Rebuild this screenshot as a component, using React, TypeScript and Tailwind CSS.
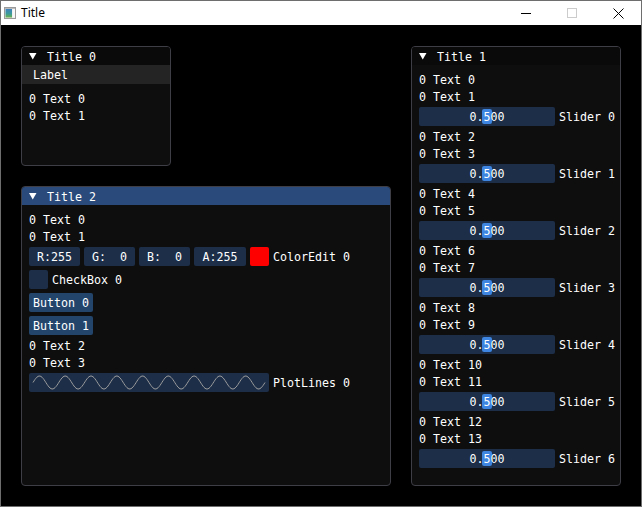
import React from "react";

const mono = "font-['DejaVu_Sans_Mono',monospace] text-[11.63px] leading-[15px] text-white whitespace-pre";
const line = `${mono} block h-[13px]`;

function Arrow() {
  return (
    <svg width="8" height="7" viewBox="0 0 8 7" className="shrink-0">
      <polygon points="0,0 7.5,0 3.75,6.5" fill="#ffffff" />
    </svg>
  );
}

function TitleBar({ title, active }: { title: string; active?: boolean }) {
  return (
    <div className={`h-[18px] shrink-0 flex items-center pl-[7px] ${active ? "bg-[#294a7a]" : "bg-[#0a0a0a]"}`}>
      <Arrow />
      <span className={`${line} ml-[10px]`}>{title}</span>
    </div>
  );
}

function Text({ children }: { children: React.ReactNode }) {
  return <div className={line}>{children}</div>;
}

function Slider({ label }: { label: string }) {
  return (
    <div className="flex items-center gap-[4px] h-[19px]">
      <div className="relative w-[136px] h-[19px] bg-[#1c2e48] rounded-[2px]">
        <div className="absolute left-[63px] top-[2px] w-[10px] h-[15px] bg-[#3d85e0] rounded-[2px]" />
        <div className="absolute inset-0 flex items-center justify-center">
          <span className={line}>0.500</span>
        </div>
      </div>
      <span className={line}>{label}</span>
    </div>
  );
}

function Field({ text, wide }: { text: string; wide?: boolean }) {
  return (
    <div
      className={`h-[19px] bg-[#1c2e48] rounded-[2px] flex items-center justify-center ${wide ? "w-[52px]" : "w-[51px]"}`}
    >
      <span className={line}>{text}</span>
    </div>
  );
}

function Button({ label }: { label: string }) {
  return (
    <div className="flex">
      <div className="h-[19px] px-[4px] bg-[#23456c] rounded-[2px] flex items-center">
        <span className={line}>{label}</span>
      </div>
    </div>
  );
}

function Plot() {
  const pts: string[] = [];
  const n = 232;
  for (let i = 0; i <= n; i++) {
    const x = 4 + i;
    const y = 9.5 - 6.5 * Math.sin((2 * Math.PI * 9 * i) / n);
    pts.push(`${x},${y.toFixed(2)}`);
  }
  return (
    <div className="flex items-center gap-[4px] h-[19px]">
      <div className="w-[240px] h-[19px] bg-[#1c2e48] rounded-[2px]">
        <svg width="240" height="19" viewBox="0 0 240 19">
          <polyline points={pts.join(" ")} fill="none" stroke="#9c9c9c" strokeWidth="1" />
        </svg>
      </div>
      <span className={line}>PlotLines 0</span>
    </div>
  );
}

function AppIcon() {
  return (
    <svg width="12" height="12" viewBox="0 0 12 12" className="shrink-0">
      <defs>
        <linearGradient id="ig" x1="0" y1="0" x2="0" y2="1">
          <stop offset="0" stopColor="#3f7fc0" />
          <stop offset="0.55" stopColor="#3a9a9a" />
          <stop offset="1" stopColor="#6ab04c" />
        </linearGradient>
      </defs>
      <rect x="0.5" y="0.5" width="11" height="11" fill="#e8e8e8" stroke="#9a9a9a" />
      <rect x="1.5" y="2" width="6.5" height="8.5" fill="url(#ig)" />
      <rect x="8.5" y="2" width="2.5" height="8.5" fill="#f7f7f7" />
      <rect x="1" y="1" width="10" height="1" fill="#bcbcbc" />
    </svg>
  );
}

export default function App() {
  return (
    <div className="w-[642px] h-[507px] border border-[#6e6e6e] flex flex-col bg-black overflow-hidden">
      <div className="h-[24px] shrink-0 bg-white flex items-center">
        <div className="pl-[3px] flex items-center">
          <AppIcon />
          <span className="ml-[5px] font-['Noto_Sans',sans-serif] text-[12px] leading-[16px] text-black">Title</span>
        </div>
        <div className="ml-auto flex h-full">
          <div className="w-[46px] h-full flex items-center justify-center">
            <svg width="10" height="10" viewBox="0 0 10 10">
              <line x1="0" y1="5.5" x2="10" y2="5.5" stroke="#000" strokeWidth="1" />
            </svg>
          </div>
          <div className="w-[46px] h-full flex items-center justify-center">
            <svg width="10" height="10" viewBox="0 0 10 10">
              <rect x="0.5" y="0.5" width="9" height="9" fill="none" stroke="#cccccc" strokeWidth="1" />
            </svg>
          </div>
          <div className="w-[46px] h-full flex items-center justify-center">
            <svg width="11" height="11" viewBox="0 0 11 11">
              <line x1="0.5" y1="0.5" x2="10.5" y2="10.5" stroke="#000" strokeWidth="1" />
              <line x1="10.5" y1="0.5" x2="0.5" y2="10.5" stroke="#000" strokeWidth="1" />
            </svg>
          </div>
        </div>
      </div>

      <div className="relative flex-1 bg-black">
        {/* Window: Title 0 */}
        <div className="absolute left-[20px] top-[21px] w-[150px] h-[120px] border border-[#3e3e47] rounded-[4px] overflow-hidden bg-[#0e0e0e] flex flex-col">
          <TitleBar title="Title 0" />
          <div className="h-[19px] shrink-0 bg-[#242424] flex items-center pl-[11px]">
            <span className={`${line} text-[#999999]`}>Label</span>
          </div>
          <div className="flex flex-col gap-[4px] pt-[8px] pl-[7px]">
            <Text>0 Text 0</Text>
            <Text>0 Text 1</Text>
          </div>
        </div>

        {/* Window: Title 2 */}
        <div className="absolute left-[20px] top-[161px] w-[370px] h-[300px] border border-[#3e3e47] rounded-[4px] overflow-hidden bg-[#0e0e0e] flex flex-col">
          <TitleBar title="Title 2" active />
          <div className="flex flex-col gap-[4px] pt-[8px] pl-[7px]">
            <Text>0 Text 0</Text>
            <Text>0 Text 1</Text>
            <div className="flex items-center gap-[4px] h-[19px]">
              <Field text="R:255" />
              <Field text="G:  0" />
              <Field text="B:  0" />
              <Field text="A:255" wide />
              <div className="w-[19px] h-[19px] bg-[#ff0000] rounded-[2px]" />
              <span className={line}>ColorEdit 0</span>
            </div>
            <div className="flex items-center gap-[4px] h-[19px]">
              <div className="w-[19px] h-[19px] bg-[#1c2e48] rounded-[2px]" />
              <span className={line}>CheckBox 0</span>
            </div>
            <Button label="Button 0" />
            <Button label="Button 1" />
            <Text>0 Text 2</Text>
            <Text>0 Text 3</Text>
            <Plot />
          </div>
        </div>

        {/* Window: Title 1 */}
        <div className="absolute left-[410px] top-[21px] w-[210px] h-[440px] border border-[#3e3e47] rounded-[4px] overflow-hidden bg-[#0e0e0e] flex flex-col">
          <TitleBar title="Title 1" />
          <div className="flex flex-col gap-[4px] pt-[8px] pl-[7px]">
            {[0, 1, 2, 3, 4, 5, 6].map((i) => (
              <React.Fragment key={i}>
                <Text>{`0 Text ${i * 2}`}</Text>
                <Text>{`0 Text ${i * 2 + 1}`}</Text>
                <Slider label={`Slider ${i}`} />
              </React.Fragment>
            ))}
          </div>
        </div>
      </div>
    </div>
  );
}
